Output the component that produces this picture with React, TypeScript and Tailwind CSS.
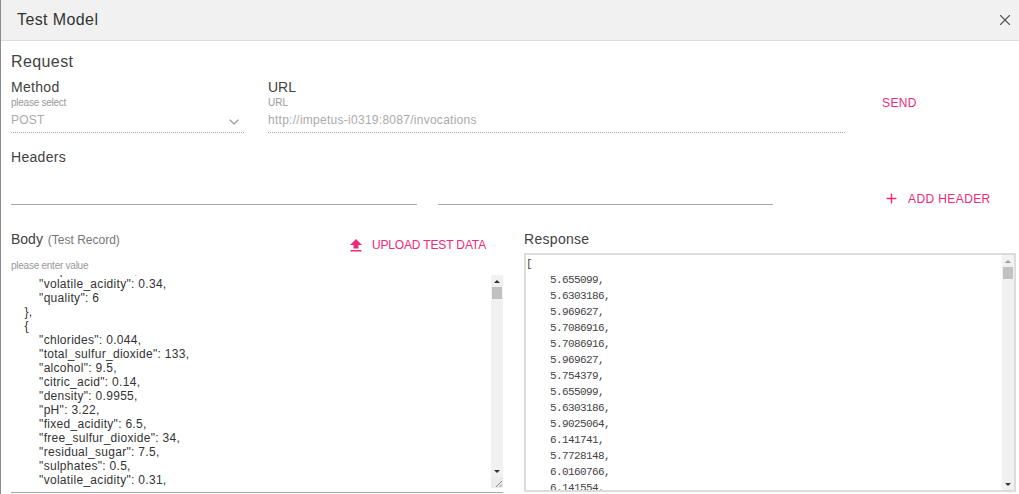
import { Plus, X, ChevronDown } from "lucide-react";

const BODY_TEXT = `        "sulphates": 0.47,
        "volatile_acidity": 0.34,
        "quality": 6
    },
    {
        "chlorides": 0.044,
        "total_sulfur_dioxide": 133,
        "alcohol": 9.5,
        "citric_acid": 0.14,
        "density": 0.9955,
        "pH": 3.22,
        "fixed_acidity": 6.5,
        "free_sulfur_dioxide": 34,
        "residual_sugar": 7.5,
        "sulphates": 0.5,
        "volatile_acidity": 0.31,`;

const RESPONSE_TEXT = `[
    5.655099,
    5.6303186,
    5.969627,
    5.7086916,
    5.7086916,
    5.969627,
    5.754379,
    5.655099,
    5.6303186,
    5.9025064,
    6.141741,
    5.7728148,
    6.0160766,
    6.141554,`;

function Scrollbar({ arrowUp, arrowDown, corner }: { arrowUp: string; arrowDown: string; corner?: boolean }) {
  return (
    <div className="flex w-3 shrink-0 flex-col bg-[#f1f1f1]">
      <div className="flex h-3 shrink-0 items-center justify-center">
        <div className={`h-0 w-0 border-x-[3px] border-b-[3px] border-x-transparent ${arrowUp}`} />
      </div>
      <div className="mx-auto h-3 w-2.5 shrink-0 bg-[#c1c1c1]" />
      <div className="flex-1" />
      <div className="flex h-3 shrink-0 items-center justify-center">
        <div className={`h-0 w-0 border-x-[3px] border-t-[3px] border-x-transparent ${arrowDown}`} />
      </div>
      {corner && (
        <div className="h-[11px] shrink-0 bg-[#ececec]">
          <svg width="12" height="11" viewBox="0 0 12 11">
            <path d="M5 10 L11 4 M8.5 10 L11 7.5" stroke="#888" strokeWidth="1" fill="none" />
          </svg>
        </div>
      )}
    </div>
  );
}

export default function App() {
  return (
    <div className="h-[494px] w-[1019px] overflow-hidden border-l border-l-[#8c8c8c] bg-white font-['Liberation_Sans',Arial,sans-serif] text-[#424242]">
      <header className="flex h-[41px] items-center justify-between border-b border-[#dedede] bg-[#f1f1f1] pl-4 pr-[5px]">
        <h1 className="text-base leading-none tracking-[0.4px] text-[#333]">Test Model</h1>
        <X size={18} strokeWidth={1.5} className="text-[#555]" />
      </header>

      <div className="pl-2.5 pr-[3px]">
        <h2 className="mt-[11px] text-base leading-[20px] tracking-[0.4px]">Request</h2>

        <div className="mt-[7px] flex">
          <div className="w-[233px]">
            <div className="text-sm leading-[16px] tracking-[0.3px]">Method</div>
            <div className="mt-[2px] text-[10px] leading-[12px] tracking-[-0.25px] text-[#999]">please select</div>
            <div className="relative mt-[3px] h-[21px] border-b border-dotted border-[#aaa] text-xs leading-[16px] tracking-[0.2px] text-[#aaa]">
              POST
              <ChevronDown size={16} strokeWidth={1.75} className="absolute right-[2px] top-[2px] text-[#999]" />
            </div>
          </div>
          <div className="ml-6 w-[577px]">
            <div className="text-sm leading-[16px]">URL</div>
            <div className="mt-[2px] text-[10px] leading-[12px] text-[#999]">URL</div>
            <div className="mt-[3px] h-[21px] border-b border-dotted border-[#aaa] text-xs leading-[16px] tracking-[0.27px] text-[#aaa]">
              http://impetus-i0319:8087/invocations
            </div>
          </div>
          <div className="ml-[37px] pt-[17px] text-xs leading-[14px] tracking-[0.4px] text-[#ec2a7a]">SEND</div>
        </div>

        <h3 className="mt-[16px] text-sm leading-[16px] tracking-[0.3px]">Headers</h3>

        <div className="flex h-[40px] items-end">
          <div className="h-px w-[406px] bg-[#a8a8a8]" />
          <div className="ml-[21px] h-px w-[335px] bg-[#a8a8a8]" />
          <div className="ml-[111px] flex items-center self-start pt-[26px] text-xs leading-[14px] tracking-[0.4px] text-[#ec2a7a]">
            <Plus size={15} strokeWidth={2.25} className="mr-[9px]" />
            ADD HEADER
          </div>
        </div>

        <div className="mt-[7px] flex">
          <div className="w-[492px]">
            <div className="flex h-[48px] items-start">
              <div className="mt-[19px] text-sm leading-[16px]">
                Body <span className="ml-px text-xs text-[#777]">(Test Record)</span>
              </div>
              <div className="ml-auto mr-[17px] mt-[26px] flex items-center text-xs leading-[14px] tracking-[-0.15px] text-[#ec2a7a]">
                <svg width="14" height="14" viewBox="0 0 14 14" className="mr-[9px]">
                  <path d="M7 1 L13 7 H9.5 V10.5 H4.5 V7 H1 Z M1.5 12 H12.5 V13.5 H1.5 Z" fill="#ec2a7a" />
                </svg>
                UPLOAD TEST DATA
              </div>
            </div>
            <div className="mb-[3px] text-[10px] leading-[12px] tracking-[-0.25px] text-[#999]">please enter value</div>
            <div className="flex h-[218px] border-b border-[#a8a8a8] pb-1">
              <pre className="flex-1 overflow-hidden font-['Liberation_Sans',Arial,sans-serif] text-xs leading-[14px] tracking-[0.3px] text-[#333]">
                <div className="-ml-px -mt-[12px]">{BODY_TEXT}</div>
              </pre>
              <Scrollbar arrowUp="border-b-[#333]" arrowDown="border-t-[#333]" corner />
            </div>
          </div>

          <div className="ml-[21px] w-[492px] pt-[19px]">
            <div className="text-sm leading-[16px] tracking-[0.3px]">Response</div>
            <div className="mt-[6px] flex h-[239px] border-2 border-[#dcdcdc]">
              <pre className="flex-1 overflow-hidden pt-px font-['Liberation_Mono',monospace] text-[11px] leading-[16px] tracking-[-0.6px] text-[#444]">{RESPONSE_TEXT}</pre>
              <Scrollbar arrowUp="border-b-[#999]" arrowDown="border-t-[#333]" />
            </div>
          </div>
        </div>
      </div>
    </div>
  );
}
